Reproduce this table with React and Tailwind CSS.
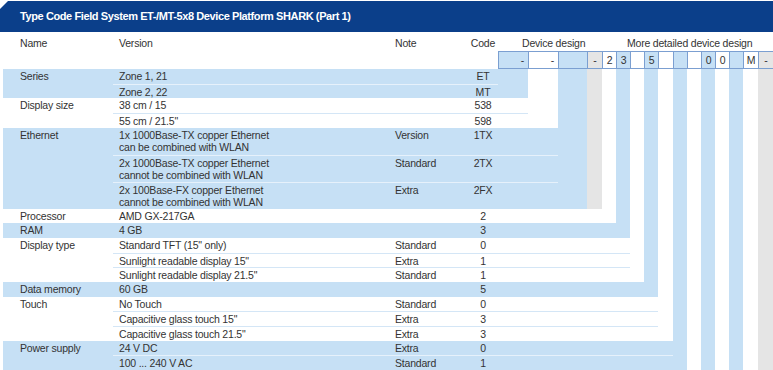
const BLUE = 'bg-[#c6e0f5]';
const WHITE = 'bg-white';
const GREY = 'bg-[#e5e5e5]';

// code columns, left to right (x 498 .. 773)
const COLS = [
  { w: 'w-[30px]', bg: BLUE, box: '-', right: true },
  { w: 'w-[30px]', bg: WHITE, box: '-', right: true },
  { w: 'w-[29px]', bg: BLUE, box: '' },
  { w: 'w-[15px]', bg: GREY, box: '-' },
  { w: 'w-[14px]', bg: WHITE, box: '2' },
  { w: 'w-[14px]', bg: BLUE, box: '3' },
  { w: 'w-[14px]', bg: WHITE, box: '' },
  { w: 'w-[14px]', bg: BLUE, box: '5' },
  { w: 'w-[15px]', bg: WHITE, box: '' },
  { w: 'w-[14px]', bg: BLUE, box: '' },
  { w: 'w-[14px]', bg: WHITE, box: '' },
  { w: 'w-[14px]', bg: BLUE, box: '0' },
  { w: 'w-[14px]', bg: WHITE, box: '0' },
  { w: 'w-[14px]', bg: BLUE, box: '' },
  { w: 'w-[15px]', bg: WHITE, box: 'M' },
  { w: 'w-[15px]', bg: GREY, box: '-' },
];

const BLUE_LINE = 'border-[#e6f1fb]';
const WHITE_LINE = 'border-[#d4e6f6]';

const GROUPS = [
  {
    name: 'Series', col: 1, bg: BLUE, line: BLUE_LINE,
    rows: [
      { v: 'Zone 1, 21', code: 'ET' },
      { v: 'Zone 2, 22', code: 'MT' },
    ],
  },
  {
    name: 'Display size', col: 2, bg: WHITE, line: WHITE_LINE,
    rows: [
      { v: '38 cm / 15', code: '538' },
      { v: '55 cm / 21.5"', code: '598' },
    ],
  },
  {
    name: 'Ethernet', col: 3, bg: BLUE, line: BLUE_LINE, tall: true,
    rows: [
      { v: '1x 1000Base-TX copper Ethernet', v2: 'can be combined with WLAN', note: 'Version', code: '1TX' },
      { v: '2x 1000Base-TX copper Ethernet', v2: 'cannot be combined with WLAN', note: 'Standard', code: '2TX' },
      { v: '2x 100Base-FX copper Ethernet', v2: 'cannot be combined with WLAN', note: 'Extra', code: '2FX' },
    ],
  },
  {
    name: 'Processor', col: 5, bg: WHITE, line: WHITE_LINE,
    rows: [{ v: 'AMD GX-217GA', code: '2' }],
  },
  {
    name: 'RAM', col: 6, bg: BLUE, line: BLUE_LINE,
    rows: [{ v: '4 GB', code: '3' }],
  },
  {
    name: 'Display type', col: 7, bg: WHITE, line: WHITE_LINE,
    rows: [
      { v: 'Standard TFT (15" only)', note: 'Standard', code: '0' },
      { v: 'Sunlight readable display 15"', note: 'Extra', code: '1' },
      { v: 'Sunlight readable display 21.5"', note: 'Standard', code: '1' },
    ],
  },
  {
    name: 'Data memory', col: 8, bg: BLUE, line: BLUE_LINE,
    rows: [{ v: '60 GB', code: '5' }],
  },
  {
    name: 'Touch', col: 9, bg: WHITE, line: WHITE_LINE,
    rows: [
      { v: 'No Touch', note: 'Standard', code: '0' },
      { v: 'Capacitive glass touch 15"', note: 'Extra', code: '3' },
      { v: 'Capacitive glass touch 21.5"', note: 'Extra', code: '3' },
    ],
  },
  {
    name: 'Power supply', col: 10, bg: BLUE, line: BLUE_LINE,
    rows: [
      { v: '24 V DC', note: 'Extra', code: '0' },
      { v: '100 ... 240 V AC', note: 'Standard', code: '1' },
    ],
  },
];

function Group({ g }) {
  const rowH = g.tall ? 'h-[27px] pt-[1px] leading-[12px]' : 'h-[14.67px] leading-[14.67px]';
  return (
    <div className="flex">
      <div className={`flex flex-1 ${g.bg}`}>
        <div className={`w-[110px] shrink-0 pl-[17px] ${g.tall ? 'pt-[1px] leading-[12px]' : 'leading-[14.67px]'}`}>
          {g.name}
        </div>
        <div className="flex flex-1 flex-col">
          {g.rows.map((r, i) => (
            <div key={i} className={`flex ${rowH} ${i ? `border-t ${g.line}` : ''}`}>
              <div className="w-[277px] shrink-0 pl-[6px]">
                {r.v}
                {r.v2 && <br />}
                {r.v2}
              </div>
              <div className="w-[78px] shrink-0 pl-[5px]">{r.note}</div>
              <div className="w-[30px] shrink-0 text-center">{r.code}</div>
            </div>
          ))}
        </div>
        <div className={`${COLS[g.col - 1].w} shrink-0`} />
      </div>
      {COLS.slice(g.col).map((c, i) => (
        <div key={i} className={`${c.w} shrink-0 ${c.bg}`} />
      ))}
    </div>
  );
}

export default function App() {
  return (
    <div
      className="w-[773px] h-[370px] overflow-hidden bg-white text-[10.5px] tracking-[-0.2px] text-[#333]"
      style={{ fontFamily: '"Liberation Sans", Arial, sans-serif' }}
    >
      {/* Title bar */}
      <div className="relative mt-[1px] flex h-[31px] items-center bg-[#0b3f8a] pl-[20px] text-[11px] font-bold tracking-[-0.4px] text-white">
        <div className="absolute left-0 top-0 h-0 w-0 border-r-[8px] border-t-[8px] border-r-transparent border-t-white" />
        Type Code Field System ET-/MT-5x8 Device Platform SHARK (Part 1)
      </div>

      {/* Column labels */}
      <div className="flex h-[19px] pl-[3px] leading-[22px]">
        <div className="w-[110px] shrink-0 pl-[17px]">Name</div>
        <div className="w-[277px] shrink-0 pl-[6px]">Version</div>
        <div className="w-[78px] shrink-0 pl-[5px]">Note</div>
        <div className="w-[30px] shrink-0 text-center">Code</div>
        <div className="w-[104px] shrink-0 whitespace-nowrap pl-[24px]">Device design</div>
        <div className="flex-1 whitespace-nowrap pl-[25px]">More detailed device design</div>
      </div>

      {/* Code boxes */}
      <div className="flex h-[18px]">
        <div className="w-[498px] shrink-0" />
        {COLS.map((c, i) => (
          <div
            key={i}
            className={`${c.w} ${c.bg} shrink-0 border-y border-l border-[#7b9fd1] leading-[16px] ${
              c.right ? 'pr-[4px] text-right' : 'text-center'
            }`}
          >
            {c.box}
          </div>
        ))}
      </div>

      {/* Rows */}
      <div className="pl-[3px]">
        {GROUPS.map((g) => (
          <Group key={g.name} g={g} />
        ))}
      </div>
    </div>
  );
}
